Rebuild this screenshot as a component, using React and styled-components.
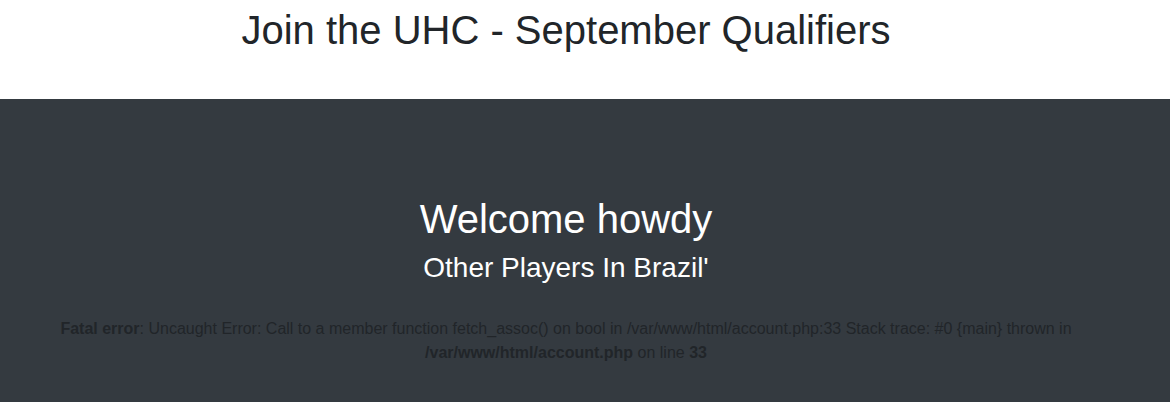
import React from "react";
import styled, { createGlobalStyle } from "styled-components";

const GlobalStyle = createGlobalStyle`
  html, body {
    margin: 0;
    padding: 0;
    background: #ffffff;
    font-family: "Liberation Sans", Arial, sans-serif;
    color: #212529;
  }
`;

const Page = styled.div`
  display: flex;
  flex-direction: column;
  min-height: 402px;
`;

const Header = styled.header`
  height: 99px;
  display: flex;
  justify-content: center;
  padding-right: 38px;
`;

const Title = styled.h1`
  margin: 6px 0 0;
  font-family: "Liberation Sans Narrow", "Liberation Sans", Arial, sans-serif;
  font-weight: 400;
  font-size: 40px;
  line-height: 1.2;
  color: #212529;
`;

const Main = styled.main`
  flex: 1;
  background: #343a40;
  display: flex;
  flex-direction: column;
  align-items: center;
  padding: 96px 38px 0 0;
  text-align: center;
`;

const Welcome = styled.h2`
  margin: 0;
  font-weight: 400;
  font-size: 40px;
  line-height: 1.2;
  color: #ffffff;
`;

const Sub = styled.h3`
  margin: 8px 0 0;
  font-weight: 400;
  font-size: 28px;
  line-height: 1.2;
  color: #ffffff;
`;

const ErrorText = styled.p`
  margin: 32px 0 0;
  max-width: 1040px;
  font-size: 16px;
  line-height: 24px;
  color: #212529;
  b {
    font-weight: 700;
  }
`;

const App = () => {
  return (
    <>
      <GlobalStyle />
      <Page>
        <Header>
          <Title>Join the UHC - September Qualifiers</Title>
        </Header>
        <Main>
          <Welcome>Welcome howdy</Welcome>
          <Sub>Other Players In Brazil'</Sub>
          <ErrorText>
            <b>Fatal error</b>: Uncaught Error: Call to a member function
            fetch_assoc() on bool in /var/www/html/account.php:33 Stack trace:
            #0 {"{main}"} thrown in <b>/var/www/html/account.php</b> on line{" "}
            <b>33</b>
          </ErrorText>
        </Main>
      </Page>
    </>
  );
};

export default App;
